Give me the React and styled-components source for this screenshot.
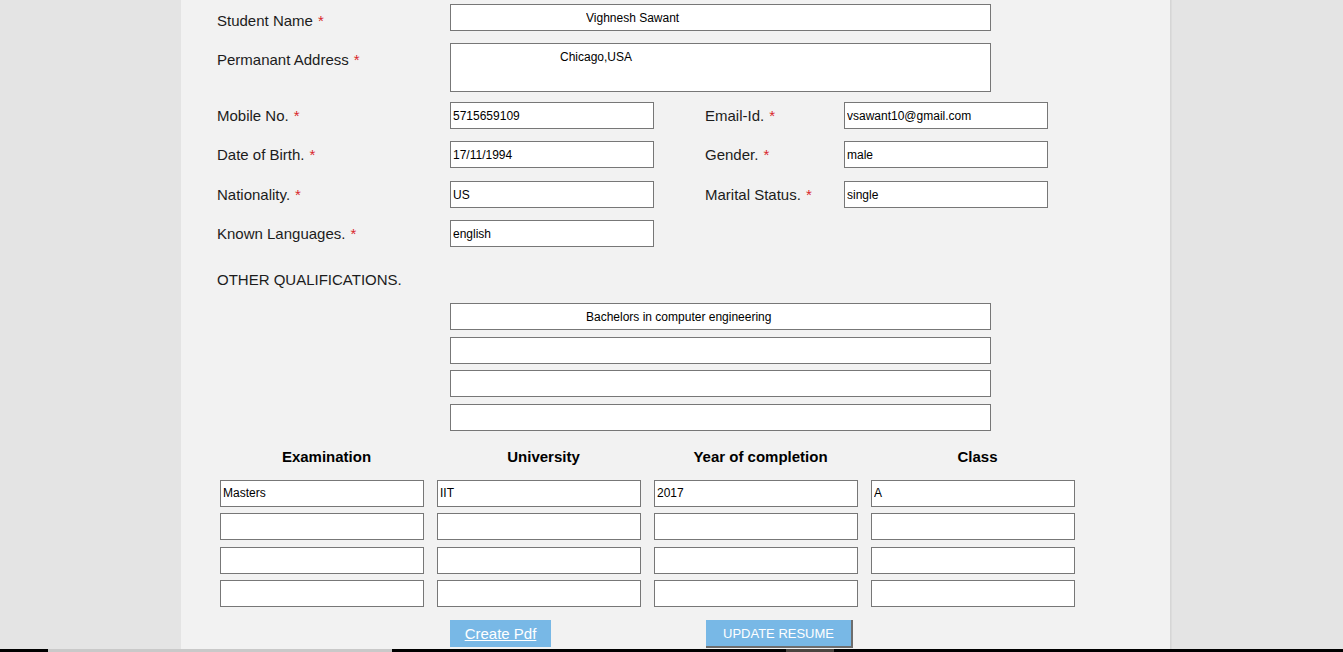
import React from "react";
import styled, { createGlobalStyle } from "styled-components";

const Global = createGlobalStyle`
  html, body {
    margin: 0;
    padding: 0;
    background: #e4e4e4;
    font-family: "Liberation Sans", Arial, sans-serif;
    overflow: hidden;
  }
  #root { height: 652px; }
`;

const Page = styled.div`
  display: flex;
  flex-direction: column;
  height: 652px;
  background: #e4e4e4;
`;

const Panel = styled.main`
  width: 989px;
  height: 649px;
  margin-left: 181px;
  background: #f2f2f2;
  box-shadow: 1px 0 0 #d6d6d6, 2px 0 0 #dcdcdc;
  box-sizing: border-box;
  padding-left: 36px;
  overflow: hidden;
`;

const Row = styled.div`
  display: flex;
  align-items: flex-start;
  margin-top: ${(p) => p.$mt}px;
`;

const Label = styled.label`
  display: block;
  box-sizing: border-box;
  width: ${(p) => p.$w || 233}px;
  margin-left: ${(p) => p.$ml || 0}px;
  padding-top: ${(p) => p.$pt || 5}px;
  font-size: 15px;
  line-height: 17px;
  color: #1c1c1c;
  white-space: nowrap;
`;

const Star = styled.span`
  color: #d9262b;
  margin-left: 5px;
`;

const Field = styled.input`
  box-sizing: border-box;
  width: ${(p) => p.$w || 204}px;
  height: 27px;
  margin: 0;
  border: 1px solid #777;
  border-radius: 0;
  background: #fff;
  padding: 0 0 0 ${(p) => p.$pl || 2}px;
  font-family: "Liberation Sans", Arial, sans-serif;
  font-size: 12px;
  color: #000;
  outline: none;
`;

const Area = styled.textarea`
  box-sizing: border-box;
  width: 541px;
  height: 49px;
  margin: 0;
  border: 1px solid #777;
  border-radius: 0;
  background: #fff;
  padding: 6px 0 0 109px;
  font-family: "Liberation Sans", Arial, sans-serif;
  font-size: 12px;
  line-height: 14px;
  color: #000;
  resize: none;
  outline: none;
  display: block;
`;

const Section = styled.div`
  margin-top: 24px;
  font-size: 15px;
  line-height: 17px;
  color: #1c1c1c;
`;

const Stack = styled.div`
  display: flex;
  flex-direction: column;
  gap: 6.5px;
  margin-top: 15px;
  margin-left: 233px;
`;

const TableHead = styled.div`
  display: grid;
  grid-template-columns: repeat(4, 217px);
  margin-top: 17.5px;
  margin-left: 1px;
`;

const Th = styled.div`
  text-align: center;
  font-weight: bold;
  font-size: 15px;
  line-height: 17px;
  color: #000;
`;

const TableBody = styled.div`
  display: grid;
  grid-template-columns: repeat(4, 217px);
  row-gap: 6.5px;
  margin-top: 14.5px;
  margin-left: 3px;
`;

const Buttons = styled.div`
  display: flex;
  align-items: flex-start;
  gap: 155px;
  margin-top: 12.5px;
  margin-left: 233px;
`;

const PdfButton = styled.a`
  display: flex;
  align-items: center;
  justify-content: center;
  box-sizing: border-box;
  width: 101px;
  height: 27px;
  background: #78b8e6;
  color: #fff;
  font-size: 15px;
  text-decoration: underline;
  cursor: pointer;
`;

const UpdateButton = styled.button`
  box-sizing: border-box;
  width: 147px;
  height: 28px;
  margin: 0;
  padding: 1px 0 0 0;
  border: none;
  border-right: 2px solid #6d6d6d;
  border-bottom: 2px solid #6d6d6d;
  background: #78b8e6;
  color: #fff;
  font-family: "Liberation Sans", Arial, sans-serif;
  font-size: 13px;
  cursor: pointer;
`;

const Footer = styled.div`
  display: flex;
  height: 3px;
  background: #000;
`;

const Seg = styled.div`
  width: ${(p) => p.$w}px;
  background: ${(p) => p.$c};
`;

const Req = ({ children }) => (
  <>
    {children}
    <Star>*</Star>
  </>
);

const pairs = [
  ["Mobile No.", "5715659109", "Email-Id.", "vsawant10@gmail.com", 10],
  ["Date of Birth.", "17/11/1994", "Gender.", "male", 12],
  ["Nationality.", "US", "Marital Status.", "single", 13],
  ["Known Languages.", "english", null, null, 12],
];

const quals = ["Bachelors in computer engineering", "", "", ""];
const heads = ["Examination", "University", "Year of completion", "Class"];
const rows = [
  ["Masters", "IIT", "2017", "A"],
  ["", "", "", ""],
  ["", "", "", ""],
  ["", "", "", ""],
];

export default function App() {
  return (
    <Page>
      <Global />
      <Panel>
        <Row $mt={4}>
          <Label $pt={8}>
            <Req>Student Name</Req>
          </Label>
          <Field $w={541} $pl={135} value="Vighnesh Sawant" readOnly />
        </Row>
        <Row $mt={12}>
          <Label $pt={8}>
            <Req>Permanant Address</Req>
          </Label>
          <Area value="Chicago,USA" readOnly />
        </Row>
        {pairs.map(([l1, v1, l2, v2, mt]) => (
          <Row key={l1} $mt={mt}>
            <Label>
              <Req>{l1}</Req>
            </Label>
            <Field value={v1} readOnly />
            {l2 && (
              <>
                <Label $w={139} $ml={51}>
                  <Req>{l2}</Req>
                </Label>
                <Field value={v2} readOnly />
              </>
            )}
          </Row>
        ))}
        <Section>OTHER QUALIFICATIONS.</Section>
        <Stack>
          {quals.map((q, i) => (
            <Field key={i} $w={541} $pl={135} value={q} readOnly />
          ))}
        </Stack>
        <TableHead>
          {heads.map((h) => (
            <Th key={h}>{h}</Th>
          ))}
        </TableHead>
        <TableBody>
          {rows.map((r, i) =>
            r.map((c, j) => <Field key={`${i}-${j}`} value={c} readOnly />)
          )}
        </TableBody>
        <Buttons>
          <PdfButton>Create Pdf</PdfButton>
          <UpdateButton>UPDATE RESUME</UpdateButton>
        </Buttons>
      </Panel>
      <Footer>
        <Seg $w={48} $c="#000" />
        <Seg $w={344} $c="#c9c9c9" />
        <Seg $w={394} $c="#000" />
        <Seg $w={48} $c="#4a443f" />
      </Footer>
    </Page>
  );
}
